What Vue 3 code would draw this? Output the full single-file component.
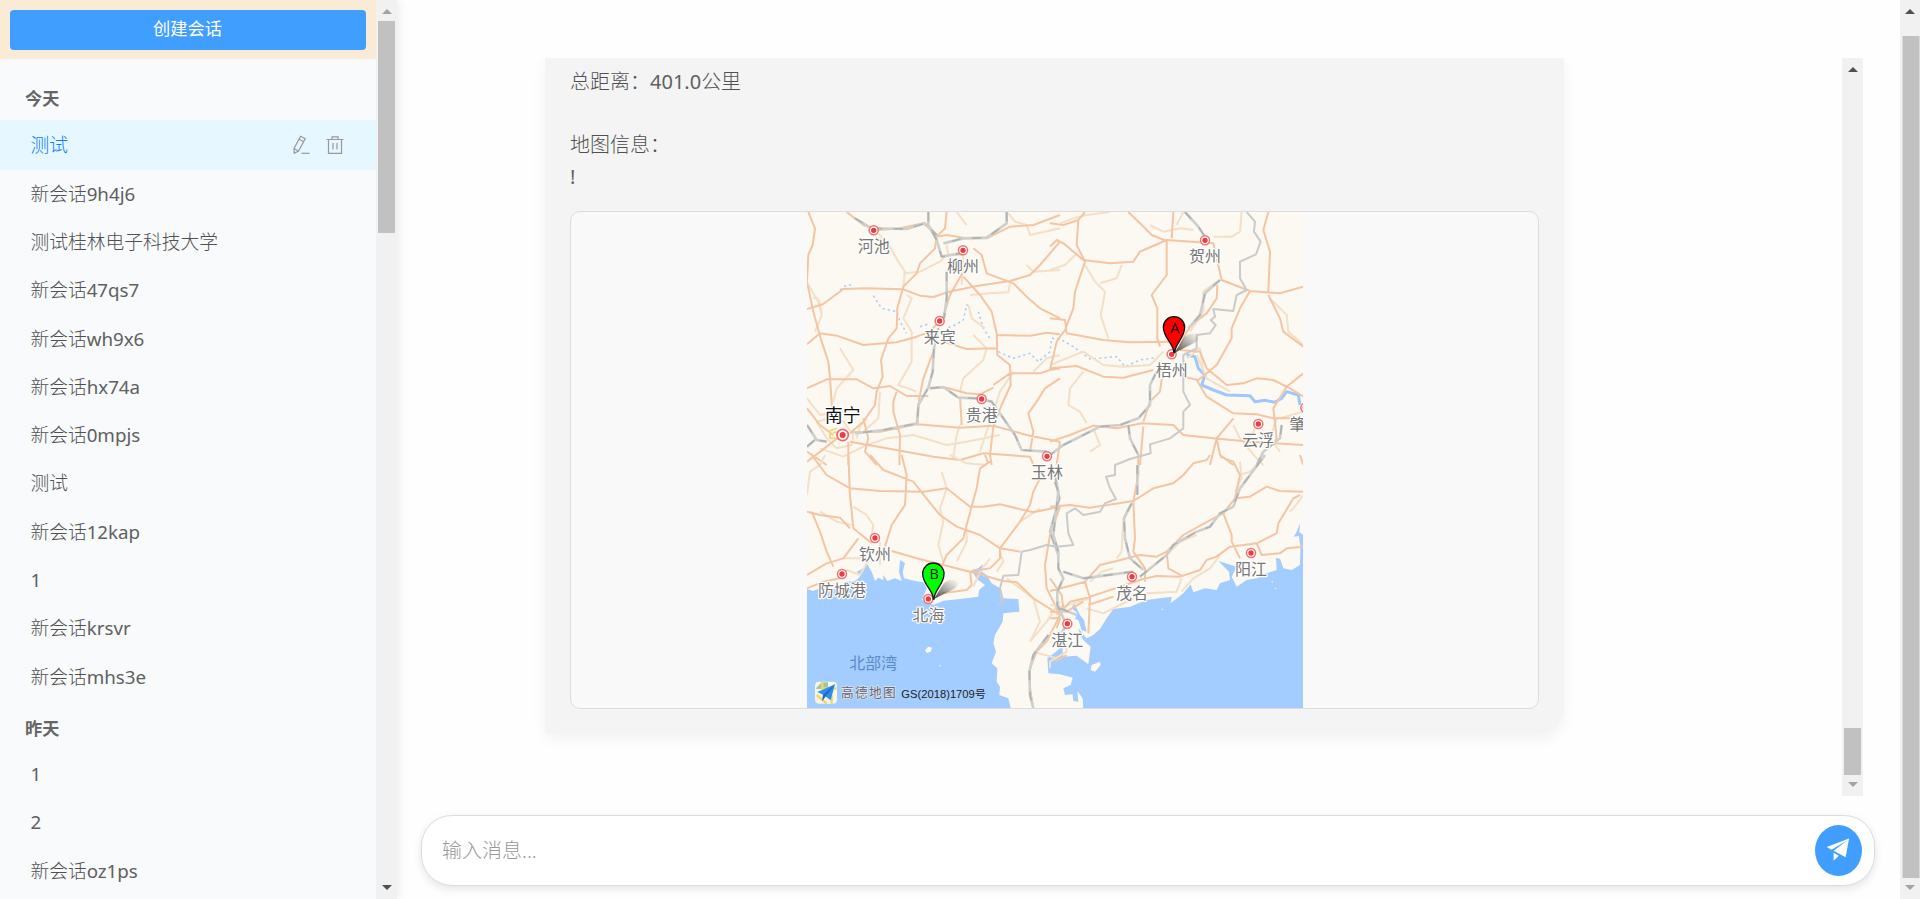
<script setup>
const todayItems = ['新会话9h4j6', '测试桂林电子科技大学', '新会话47qs7', '新会话wh9x6', '新会话hx74a', '新会话0mpjs', '测试', '新会话12kap', '1', '新会话krsvr', '新会话mhs3e']
const yesterdayItems = ['1', '2', '新会话oz1ps']

// Splits a label into Han and Latin runs, which carry different weights
const runs = (s) => s.match(/[!-~]+|[^!-~]+/g).map((t) => ({ t, latin: /[!-~]/.test(t) }))

// The map is split in four tiles, each with its own offset
const tiles = [
  {
    t: 'translate(0,0)',
    minor: 'M235,85L270,125L295,170L315,200L310,245M310,205L360,200L420,170L440,150M625,25L645,50L680,60L690,90L780,70M120,430L160,495L110,550L100,590M25,240L55,290L65,330L45,380M40,280Q62,270 65,330M320,270L335,280L310,340L335,380L335,470L295,540L350,560M505,300L515,340L555,370M520,390L560,430L550,465L490,520L480,560M630,235L625,262L570,265L510,270M680,180L700,200L780,195M500,60L470,21M780,450L740,460L700,500M640,500L600,560L580,620L540,740M480,660L470,690L460,760M60,730L130,755L200,720L260,700L340,690L440,720L500,710L600,690M200,640L180,665L170,700M240,560L235,640L190,680M440,120L445,150L490,150L485,240M21,580L60,630L130,620M50,650L90,640L130,650L160,690L155,720L110,730L80,700Z',
    major: 'M25,21L45,70L38,120L25,150L21,230L40,320L62,400L85,470L90,520L97,620M21,312L70,297L130,252L200,250L310,253L360,272L400,276L440,262L530,243L630,228L690,210L720,180L780,110M21,418L60,385L110,392L190,420L290,412L350,395L390,380L430,335L450,270L487,205M140,21L190,60L235,75L300,70L370,55L410,90L405,130L360,175L350,205L310,245L292,310L290,370L265,400L243,465L248,515L230,560L225,600L190,650L150,685M410,95L440,90L500,100L560,100L630,65L700,60L780,30M440,21L435,70L410,95M520,130L545,150L560,205L640,235L680,275L720,310L780,340M490,215L540,270L575,320L590,385L592,450L630,480L632,540L605,600L580,665L570,750L575,780M590,390L690,392L740,383L780,388M430,410L500,432L590,430M21,550L80,523L170,523L220,550L270,543L320,573L385,573M400,440L370,520L358,580L350,650M390,548L440,548L500,565L540,568L580,548M580,540L630,505L720,505L750,495L780,490M780,520L735,550L710,590L685,625L700,680L690,740M155,682L240,680L350,658L480,668L580,662L680,690L780,710M290,560L280,590L280,620L300,690L298,780M480,575L485,660M21,610L60,660L100,690M150,710L260,730L400,755L480,765L550,745L690,755L700,780M21,770L80,725L125,690M145,710V780M21,740L80,780M190,640L205,700L195,740L230,780',
    rail: 'M385,21L385,60L410,105L425,155L480,145M165,40L215,70L320,72L375,55L410,90M440,200L440,280L432,340M415,370L402,430L398,500L385,548L355,600L352,655L250,675L165,685M390,550L430,546L475,578L530,580L575,590L610,640L645,690L665,735L740,740M21,660L50,705L80,710M21,725L50,700M620,21L620,55L560,98L490,100L430,115',
  },
  {
    t: 'translate(750,0)',
    minor: 'M105,180L135,230L165,260L160,290L152,330L165,370L175,400M30,55L70,40L110,30L180,21M215,180L200,220L165,230L150,235M300,60L340,80L390,70L430,75M380,60L400,21M575,21L570,80L545,95L490,95M660,280L710,330L715,380L760,420M100,500L60,550L55,600L90,620L110,655M0,480L100,440L160,480L220,485L300,480L340,440M0,195L45,180L75,150M500,230L460,260L460,320L420,380M630,640L600,700M760,620L690,640M550,660L570,700L620,760L640,780M130,670L150,720L120,740M440,450L470,520L540,560M270,140L330,115M410,460L450,430L460,500M680,640L660,700L690,740',
    major: 'M0,55L40,60L85,45L80,120L105,170L75,260L70,310L45,375L20,410L0,495M85,45L105,21M0,125L20,105L40,115L100,165L180,175L250,170L270,140L350,105L490,115L515,225L600,258L690,265L760,245M235,21L270,55L305,90L350,108M370,21L365,100M350,108L350,210L305,270L322,310L322,400L330,425M0,340L45,345L50,385L160,405L240,412L370,410M390,420L410,380L430,355L470,325L500,280L502,240M655,21L640,75L660,140L655,260M655,270L690,340L700,380L760,425M600,258L570,310L545,370L545,400L500,480L445,525L400,515M0,490L80,483L160,515L220,518L310,495M390,435L450,440L470,490L530,540L580,535L620,520L670,525L720,550L760,575M760,505L710,545L670,610L680,700L670,720M440,525L470,575L550,625L620,628L670,640L760,640M550,640L500,700L510,750L550,780M0,710L60,690L130,662L200,670L275,655L370,660L400,690L490,700L600,710L760,720M280,650L300,590L330,560L340,490M280,665L270,780M500,700L480,780M30,710L20,780',
    rail: 'M405,21L445,65L465,95M510,225L465,265L450,330L415,370M320,500L300,540L300,600L265,640L210,660L150,665L100,690L40,720L0,750M235,660L240,700L265,750M695,660L690,700L640,740L620,780',
  },
  {
    t: 'translate(0,750)',
    minor: 'M75,0L60,30L30,50L21,120M425,50L440,100L420,160L430,200M160,155L200,180L220,210L215,240M430,200L415,270L430,320M500,220L500,260L470,320M600,290L610,320L590,350M620,370L700,430L720,500L690,560M700,590L735,600L770,610M450,0L500,25L560,30M570,310L540,350L520,395M240,260L240,330M130,310L200,310M140,345L180,360L215,300M780,440L740,500L690,560M660,200L720,160M60,170L110,200L155,210',
    major: 'M35,0L80,60L150,100L240,108L370,110L440,100L510,155L550,155L600,148L700,172L780,155M145,0L150,120L160,220L215,265M210,0L250,45L340,80L375,125L420,180L470,215L540,240L600,280L660,290M305,0L320,60L315,150L275,210L255,275M570,20L540,40L530,100L500,210L490,250L440,300L425,335M565,25L555,0M720,70L700,110L690,150L660,200L600,280L600,310L570,340L510,350L515,390L500,405L425,415M21,170L60,180L120,188L150,220M35,170L60,230L80,290L100,335M21,400L70,380L120,370L140,345M21,360L80,325L130,310L175,250M275,288L350,310L430,330L510,350L610,378L650,382L700,430L780,480L740,560L710,590L690,640L690,700L700,760M780,155L750,240L735,330L740,400L780,480',
    rail: 'M765,60L778,130L750,230L775,300M745,540L700,600L688,650L690,720L700,760',
  },
  {
    t: 'translate(750,750)',
    minor: 'M290,415L380,410L395,370M395,410L430,370L480,340L510,300M110,460L160,475L210,450L250,430M120,380L155,350L190,340M240,150L220,190L215,290L200,310M570,60L600,50L640,10M760,120L730,160L720,170M350,300L390,260L440,240M0,450L40,455L120,430M570,20L575,70L555,110M0,640L0,620L50,590L40,520',
    major: 'M0,155L60,150L120,158L250,138L310,100L370,85L400,60L430,25L470,15L480,0M510,5L550,20L570,60L555,130L520,175L490,190L400,240L350,290L320,305L270,300M265,0L265,60L250,140L255,250L250,290L285,340L285,380M555,130L600,125L650,95L690,108L760,110M750,120L730,130L700,180L685,205L680,235L620,265L540,275L500,305L470,315L450,345L390,365L320,363L280,372L105,430L60,440L35,470M270,300L200,318L150,330L105,380L120,430L115,535M350,290L355,340L395,362M520,175L545,240L545,260L570,310M620,265L635,300L690,295L710,280L760,275M0,408L70,390L105,380M115,450L190,425M0,370L35,420L40,460M0,470L50,470L100,440M0,490L30,490L20,520M15,620L50,600M750,0L760,30',
    rail: 'M15,80L25,110L10,240L25,290L25,340L40,370L22,410L22,450L50,510L30,540M40,350L100,370L250,350M245,145L222,190L225,250L240,310L280,345M270,365L350,300L370,270L440,230L480,215L510,175L550,155L570,100L645,0M262,30V120M30,460L80,480',
  },
]

const cities = [
  { n: '河池', x: 221, y: 76 }, { n: '柳州', x: 489, y: 136 }, { n: '来宾', x: 419, y: 348 },
  { n: '贵港', x: 545, y: 582 }, { n: '玉林', x: 741, y: 754 }, { n: '贺州', x: 1215, y: 106 },
  { n: '梧州', x: 1115, y: 448 }, { n: '云浮', x: 1375, y: 657 }, { n: '肇庆', x: 1516, y: 608 },
  { n: '钦州', x: 225, y: 999 }, { n: '防城港', x: 126, y: 1107 }, { n: '北海', x: 385, y: 1182 },
  { n: '茂名', x: 996, y: 1115 }, { n: '阳江', x: 1353, y: 1044 }, { n: '湛江', x: 802, y: 1256 },
]
</script>

<template>
  <div class="page">
    <aside class="sidebar">
      <div class="side-body">
        <div class="side-head"><button class="create">创建会话</button></div>
        <div class="groups">
          <div class="group-title">今天</div>
          <div class="item active">
            <span>测试</span>
            <span class="tools">
              <svg viewBox="0 0 18 20"><path d="M8.6 1.3 13.2 3.7 6.6 16 2.2 18.3 2 13.5ZM7.2 4.3 11.6 6.7M2 13.5 6.6 16" /><path d="M9.4 18.3H17.6" /></svg>
              <svg viewBox="0 0 18 20"><path d="M.5 4.5H17.5M6 4V1.8H12V4M2.5 4.5V18.3H15.5V4.5M7 8V14.5M11 8V14.5" /></svg>
            </span>
          </div>
          <div v-for="s in todayItems" :key="s" class="item"><span v-for="r in runs(s)" :key="r.t" :class="{ latin: r.latin }">{{ r.t }}</span></div>
          <div class="group-title">昨天</div>
          <div v-for="s in yesterdayItems" :key="s" class="item"><span v-for="r in runs(s)" :key="r.t" :class="{ latin: r.latin }">{{ r.t }}</span></div>
        </div>
      </div>
      <div class="bar side-bar">
        <i class="arrow up dim"></i><div class="thumb"></div><i class="arrow down"></i>
      </div>
    </aside>

    <main class="main">
      <section class="chat">
        <div class="messages">
          <div class="bubble">
            <div class="line">总距离：<span class="latin">401.0</span>公里</div>
            <div class="line">&nbsp;</div>
            <div class="line">地图信息：</div>
            <div class="line latin">!</div>
            <div class="map-box">
              <svg class="map" viewBox="21 21 1488 1488">
                <rect x="21" y="21" width="1488" height="1488" fill="#fcf9f2" />
                <g transform="translate(0,750)" fill="#a3ccff">
                  <path d="M21,402L40,408L60,398L100,402L150,395L140,380L165,378L180,365L170,350L190,340L200,325L215,350L225,378L235,368L250,376L250,360L262,378L285,370L305,378L297,350L300,315L315,325L308,350L312,370L345,378L370,382L380,400L366,435L400,450L430,437L480,432L535,425L537,405L555,390L530,372L515,345L535,340L548,328L545,350L560,360L575,385L600,400L603,430L655,432L658,470L610,475L608,500L585,540L580,565L588,590L575,625L592,640L590,680L600,695L598,720L625,730L632,760H21Z" />
                  <path d="M850,760L848,730L832,708L835,740L820,738L818,718L795,720L790,700L812,690L818,668L780,658L745,655L742,610L762,595L780,580L785,555L790,605L830,602L865,628L872,575L850,555L840,540L835,520L860,550L880,540L900,522L920,490L940,462L990,455L1040,435L1115,425L1112,445L1150,415L1172,388L1180,412L1215,400L1250,405L1260,385L1290,375L1287,350L1255,318L1310,335L1295,365L1310,395L1340,375L1370,370L1400,355L1430,345L1428,308L1440,312L1450,340L1475,345L1500,330L1502,255L1510,255V760Z" />
                  <path d="M1500,205L1488,235L1480,245L1497,243L1500,270L1510,268V240L1498,232ZM822,445L840,480L852,495L860,530L845,525L835,495L825,492L832,475L815,460Z" />
                  <path d="M375,585L385,575L396,578L392,590L380,594ZM875,630L900,620L902,630L885,650L872,645ZM415,628L423,632L422,636ZM1086,460l4,5l-5,0ZM1424,398l7,3l-6,2ZM1415,378l5,3l-5,3Z" fill="#fcf9f2" />
                </g>
                <g fill="none" stroke-linejoin="round">
                  <path d="M120,255L140,240L160,240M220,272L245,310L290,320L300,350L320,385M360,365L390,355M445,368L465,360L490,345L500,300L515,305M535,320L550,370L570,400M595,440L640,460L690,445L715,470L750,440L755,400L780,402L820,425L870,462L950,455L975,485L1020,465L1085,455" stroke="#a9cdfa" stroke-width="4.5" stroke-dasharray="7 9" />
                  <path d="M1160,450L1185,455L1195,490L1215,510L1205,540L1240,555L1280,570L1350,572L1365,590L1395,586L1425,592L1445,580L1460,560L1495,570L1500,600" stroke="#9cc8ff" stroke-width="9" />
                  <g v-for="l in tiles" :key="l.t" :transform="l.t">
                    <path :d="l.minor" stroke="#f4dfc7" stroke-width="6" />
                    <path :d="l.major" stroke="#f3c5a2" stroke-width="6" />
                    <path :d="l.rail" stroke="#cfd0ce" stroke-width="8" />
                    <path :d="l.rail" stroke="#acb3b5" stroke-width="5" stroke-dasharray="28 34" />
                  </g>
                  <path d="M1340,21L1365,50L1362,80L1382,110L1368,148L1320,170L1320,220L1340,255L1310,270L1300,318L1240,312L1245,335L1232,345L1247,360L1230,385L1190,390L1190,430L1150,450L1150,515L1150,560L1170,600L1150,620L1150,670L1110,700L1050,718L1052,745L990,762L945,780L945,810L918,815L930,850L948,882L915,895L900,920L850,930L825,910L800,925L805,985L820,1020L770,1025L740,1020L690,1035L665,1040L655,1110L610,1112L600,1150L610,1190L595,1198" stroke="#cacbca" stroke-width="6" />
                </g>
                <path d="M90,677L110,670M90,677V700H112M98,682H118" stroke="#f2d66e" stroke-width="5" fill="none" />
                <g class="cities">
                  <g v-for="c in cities" :key="c.n">
                    <circle :cx="c.x" :cy="c.y" r="13.5" fill="#fff" stroke="#ee7476" stroke-width="4.5" />
                    <circle :cx="c.x" :cy="c.y" r="8" fill="#e93d43" />
                    <text :x="c.x" :y="c.y + 66">{{ c.n }}</text>
                  </g>
                  <circle cx="128" cy="690" r="17" fill="#fff" stroke="#ee6467" stroke-width="5" />
                  <circle cx="128" cy="690" r="9" fill="#e93d43" />
                  <text class="capital" x="128" y="651">南宁</text>
                  <text class="bay" x="220" y="1392">北部湾</text>
                </g>
                <defs>
                  <linearGradient id="shade" x1="0" y1="1" x2="1" y2="0">
                    <stop offset="0" stop-color="#222" stop-opacity=".9" /><stop offset="1" stop-color="#777" stop-opacity="0" />
                  </linearGradient>
                </defs>
                <g v-for="p in [{ n: 'A', x: 1122, y: 369, f: '#f00' }, { n: 'B', x: 400, y: 1108, f: '#0f0' }]" :key="p.n" :transform="`translate(${p.x},${p.y})`">
                  <path d="M2,74L30,28Q50,10 72,20Q82,36 50,50Z" fill="url(#shade)" />
                  <path d="M0,74C-1,46 -32,30 -32,-2A32,32 0 1 1 32,-2C32,30 3,46 2,74Z" :fill="p.f" stroke="#111" stroke-width="4" />
                  <text class="pin" x="2" y="14">{{ p.n }}</text>
                </g>
                <g>
                  <rect x="45" y="1430" width="66" height="66" rx="12" fill="#f8f5e9" />
                  <path d="M48,1450L65,1432H84V1452H50Z" fill="#9bc7a2" /><path d="M67,1430V1450H110M50,1470L80,1496M95,1470V1496" stroke="#f6d36a" stroke-width="7" fill="none" />
                  <path d="M52,1461L105,1438L92,1486L76,1474L67,1488L69,1469Z" fill="#2f8ded" /><path d="M69,1470L105,1438L76,1475L67,1488Z" fill="#176bc5" />
                </g>
                <text class="brand" x="123" y="1476" textLength="164">高德地图</text>
                <text class="license" x="304" y="1478" textLength="254" lengthAdjust="spacingAndGlyphs">GS(2018)1709号</text>
              </svg>
            </div>
          </div>
        </div>
        <div class="bar chat-bar">
          <i class="arrow up"></i><div class="thumb"></div><i class="arrow down dim"></i>
        </div>
      </section>
      <div class="composer">
        <span class="placeholder">输入消息...</span>
        <button class="send"><svg viewBox="0 0 1024 1024"><path d="m64 448 832-320-128 704-446.08-243.328L832 192 242.816 545.472zm256 512V657.024L512 768z" /></svg></button>
      </div>
    </main>

    <div class="bar page-bar">
      <i class="arrow up"></i><div class="thumb"></div><i class="arrow down dim"></i>
    </div>
  </div>
</template>

<style>
body { margin: 0; overflow: hidden; }
</style>

<style scoped>
* { box-sizing: border-box; }
.page { display: flex; width: 1920px; height: 899px; overflow: hidden; background: #fefefe; font-family: "Noto Sans", "Noto Sans CJK SC", sans-serif; color: #505050; }
button { border: 0; padding: 0; font-family: inherit; }
.sidebar { display: flex; width: 397px; flex: none; background: #f8fafc; box-shadow: 2px 0 10px rgba(0, 0, 0, .08); }
.side-body { width: 376px; overflow: hidden; }
.side-head { height: 59px; padding: 10px; background: #faebd7; }
.create { display: block; width: 356px; height: 40px; padding: 0 1px 2px 0; border-radius: 4px; background: #409eff; color: #fff; font-size: 17.3px; line-height: 38px; }
.groups { padding-top: 12px; }
.group-title { height: 49px; padding-left: 25px; font-size: 17.2px; font-weight: 700; line-height: 56px; color: #666; }
.item { display: flex; align-items: center; height: 48.3px; padding: 0 31px 1px 30.4px; font-size: 18.75px; line-height: 28px; font-weight: 300; }
.latin { font-weight: 400; color: #606060; }
.item.active { justify-content: space-between; height: 50px; padding-bottom: 0; background: #e6f7ff; color: #0a80ff; }
.tools { display: flex; gap: 16px; margin-right: 1.5px; }
.tools svg { width: 18px; height: 20px; fill: none; stroke: #999; stroke-width: 1.2; }
.bar { display: flex; flex-direction: column; align-items: center; flex: none; width: 21px; background: #f1f1f1; }
.arrow { width: 0; height: 0; flex: none; border: 0 solid transparent; border-width: 0 5px; }
.up { margin-top: 9px; border-bottom: 5px solid #505050; }
.down { margin: auto 0 9px; border-top: 5px solid #505050; }
.up.dim { border-bottom-color: #a3a3a3; }
.down.dim { border-top-color: #a3a3a3; }
.thumb { width: 17px; background: #c1c1c1; }
.side-bar .thumb { height: 212px; margin-top: 7px; }
.main { flex: 1; display: flex; flex-direction: column; padding: 58px 25px 13px 24px; min-width: 0; }
.chat { display: flex; justify-content: space-between; height: 738px; margin-right: 12px; }
.messages { flex: 1; overflow: hidden; padding-left: 124px; }
.bubble { width: 1019px; height: 676px; padding: 8px 25px 0; border-radius: 0 0 25px 5px; background: #f4f4f4; box-shadow: 0 5px 15px rgba(0, 0, 0, .05); }
.line { height: 31.6px; font-size: 20px; line-height: 32px; font-weight: 300; white-space: pre; }
.line.latin { font-weight: 400; }
.map-box { width: 969px; height: 498px; margin-top: 18.6px; border: 1px solid #ddd; border-radius: 10px; background: #f9f9f9; overflow: hidden; display: flex; justify-content: center; }
.map { width: 496px; height: 496px; display: block; }
.cities text { font-size: 48px; text-anchor: middle; fill: #777; stroke: #fff; stroke-width: 7px; stroke-linejoin: round; paint-order: stroke; }
.cities .capital { font-size: 54px; fill: #111; }
.cities .bay { fill: #5a8bc9; stroke: none; }
.pin { font: 400 43px "Open Sans", sans-serif; text-anchor: middle; fill: #111; }
.brand { font-size: 38px; font-weight: 400; fill: #667; stroke: #dde6f0; stroke-width: 4px; paint-order: stroke; }
.license { font: 400 32px "Liberation Sans", "Noto Sans CJK SC", sans-serif; fill: #222; }
.chat-bar .thumb { height: 47px; margin-top: 656px; }
.composer { display: flex; align-items: center; justify-content: space-between; height: 71px; margin-top: 19px; padding: 0 12px 0 20px; border: 1px solid #ddd; border-radius: 31px; background: #fff; box-shadow: 0 3px 8px rgba(0, 0, 0, .1); }
.placeholder { font-size: 20px; line-height: 30px; font-weight: 300; color: #999; }
.send { display: grid; place-items: center; width: 47px; height: 51px; padding-bottom: 4px; border-radius: 50%; background: #409eff; }
.send svg { width: 27.5px; height: 27.5px; fill: #fff; }
.page-bar { width: 20px; }
.page-bar .thumb { height: 842px; margin-top: 22px; transform: translateX(.5px); }
</style>
